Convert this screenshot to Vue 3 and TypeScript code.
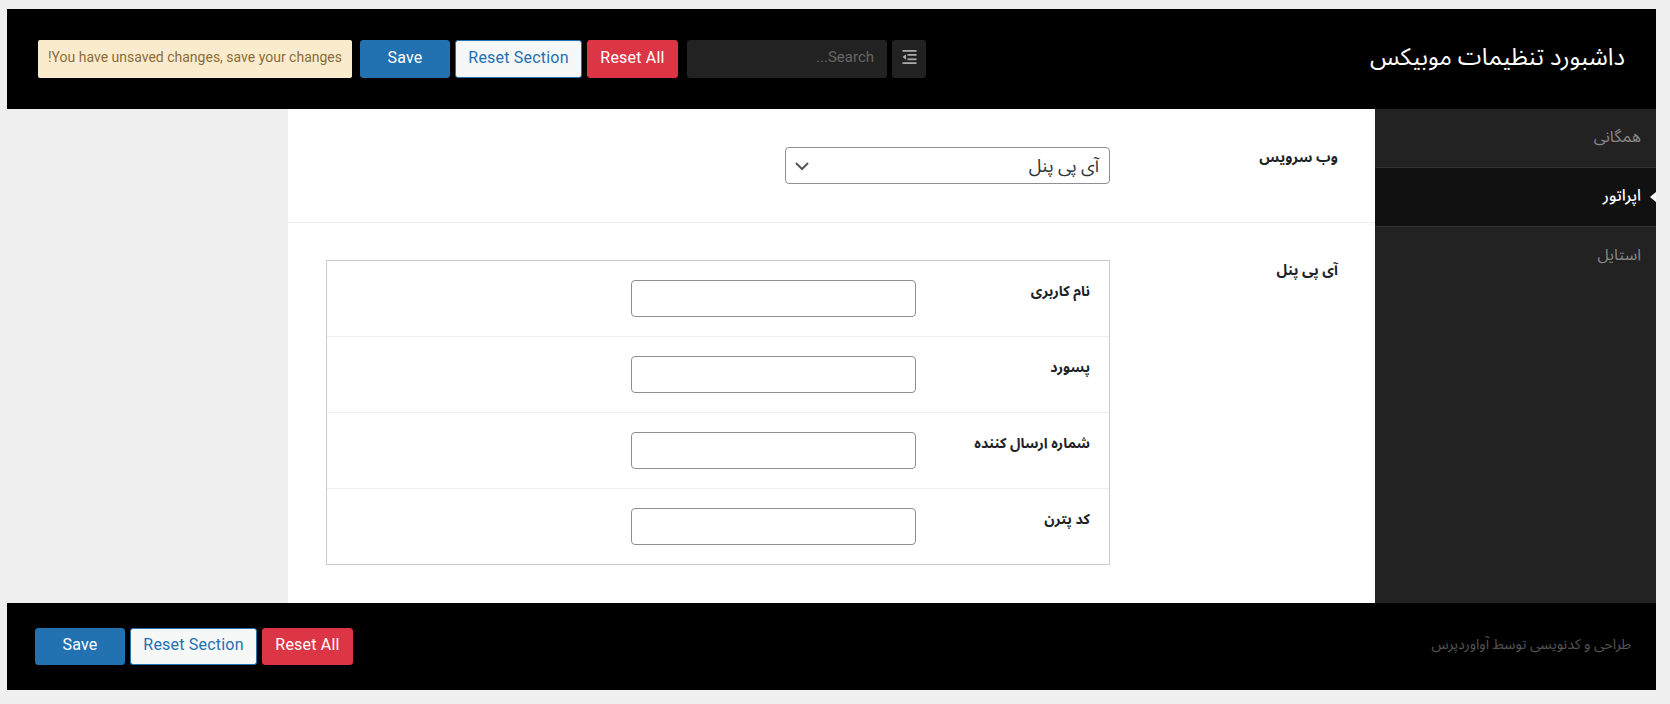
<script setup lang="ts">
const navItems = [
  { label: 'همگانی', active: false },
  { label: 'اپراتور', active: true },
  { label: 'استایل', active: false },
]
const fields = ['نام کاربری', 'پسورد', 'شماره ارسال کننده', 'کد پترن']
</script>

<template>
  <div class="page" dir="rtl">
    <header class="top">
      <h1 class="title">داشبورد تنظیمات موبیکس</h1>
      <div class="tools">
        <button class="toggle" type="button" aria-label="toggle">
          <svg width="15" height="14" viewBox="0 0 15 14">
            <rect x="0.5" y="0" width="14" height="1.8" fill="#aaa" />
            <rect x="5.5" y="4" width="9" height="1.8" fill="#aaa" />
            <rect x="5.5" y="8.4" width="9" height="1.8" fill="#aaa" />
            <polygon points="0.5,7 4,4.2 4,9.8" fill="#aaa" />
            <rect x="0.5" y="12.2" width="14" height="1.8" fill="#aaa" />
          </svg>
        </button>
        <div class="search" dir="ltr"><span>...Search</span></div>
        <div class="actions">
          <button class="btn danger" type="button">Reset All</button>
          <button class="btn ghost" type="button">Reset Section</button>
          <button class="btn primary" type="button">Save</button>
        </div>
        <div class="notice">!You have unsaved changes, save your changes</div>
      </div>
    </header>

    <div class="body">
      <nav class="side">
        <a v-for="item in navItems" :key="item.label" class="nav" :class="{ active: item.active }">{{ item.label }}</a>
      </nav>
      <main class="main">
        <section class="row">
          <div class="row-label">وب سرویس</div>
          <div class="select">
            <span>آی پی پنل</span>
            <svg width="14" height="10" viewBox="0 0 14 10">
              <path d="M1 2 L7 8 L13 2" fill="none" stroke="#50575e" stroke-width="2" />
            </svg>
          </div>
        </section>
        <section class="row second">
          <div class="row-label">آی پی پنل</div>
          <div class="table">
            <div v-for="f in fields" :key="f" class="t-row">
              <div class="t-label">{{ f }}</div>
              <div class="t-input"></div>
            </div>
          </div>
        </section>
      </main>
      <div class="gutter"></div>
    </div>

    <footer class="bottom">
      <div class="credit">طراحی و کدنویسی توسط آواوردپرس</div>
      <div class="actions foot">
        <button class="btn danger" type="button">Reset All</button>
        <button class="btn ghost" type="button">Reset Section</button>
        <button class="btn primary" type="button">Save</button>
      </div>
    </footer>
  </div>
</template>

<style>
html, body { margin: 0; background: #f0f0f0; }
</style>

<style scoped>
.page {
  width: 1649px;
  margin: 9px 14px 14px 7px;
  font-family: "Roboto", "Noto Sans Arabic", sans-serif;
  color: #1d2327;
}
.top {
  height: 100px;
  background: #000;
  display: flex;
  align-items: center;
  justify-content: space-between;
  padding: 0 31px 0 31px;
  box-sizing: border-box;
}
.title {
  margin: 0 0 3px;
  font-size: 24px;
  font-weight: 400;
  color: #fff;
}
.tools { display: flex; align-items: center; }
.toggle {
  width: 34px;
  height: 38px;
  padding: 0 0 4px;
  border: 0;
  border-radius: 3px;
  background: #222;
  display: flex;
  align-items: center;
  justify-content: center;
}
.search {
  width: 200px;
  height: 38px;
  margin-right: 5px;
  padding: 0 13px 4px;
  box-sizing: border-box;
  background: #222;
  border-radius: 3px;
  color: #666;
  font-size: 15px;
  display: flex;
  align-items: center;
  justify-content: flex-end;
}
.actions { display: flex; gap: 5px; margin-right: 9px; }
.btn {
  height: 38px;
  border-radius: 3px;
  font-family: "Roboto", sans-serif;
  font-size: 16px;
  box-sizing: border-box;
  padding: 0 0 3px;
  border: 1px solid transparent;
  letter-spacing: 0.2px;
}
.primary { width: 90px; background: #2271b1; border-color: #2271b1; color: #fff; }
.ghost { width: 127px; background: #f6f7f7; border-color: #2271b1; color: #2271b1; }
.danger { width: 91px; background: #dc3545; border-color: #dc3545; color: #fff; }
.notice {
  width: 314px;
  height: 38px;
  margin-right: 8px;
  padding-bottom: 5px;
  box-sizing: border-box;
  background: #faebcc;
  border-radius: 2px;
  color: #8a6d3b;
  font-size: 14px;
  display: flex;
  align-items: center;
  justify-content: center;
  direction: ltr;
}
.body { display: flex; height: 494px; }
.side { width: 281px; flex: none; background: #222; }
.nav {
  display: block;
  height: 59px;
  box-sizing: border-box;
  padding: 11px 15px 0 0;
  border-bottom: 1px solid #333;
  font-size: 16px;
  color: #888;
  position: relative;
}
.nav:last-child { border-bottom: 0; }
.nav.active { background: #111; color: #fff; font-weight: 500; }
.nav.active::before {
  content: "";
  position: absolute;
  right: 0;
  top: 24px;
  border: 5px solid transparent;
  border-right: 0;
  border-left: 6px solid #fff;
  transform: scaleX(-1);
}
.main { width: 1087px; flex: none; background: #fff; }
.gutter { flex: 1; }
.row {
  display: flex;
  padding: 38px 0;
  box-sizing: border-box;
}
.row.second { border-top: 1px solid #eee; padding-top: 37px; padding-bottom: 0; }
.row-label {
  width: 265px;
  flex: none;
  box-sizing: border-box;
  padding: 1px 37px 0 0;
  font-size: 14.4px;
  font-weight: 700;
  line-height: 20px;
}
.select {
  width: 325px;
  height: 37px;
  box-sizing: border-box;
  border: 1px solid #8c8f94;
  border-radius: 4px;
  padding: 0 10px 0 9px;
  display: flex;
  align-items: center;
  justify-content: space-between;
  font-size: 18px;
  color: #2c3338;
}
.table { width: 784px; height: 305px; box-sizing: border-box; border: 1px solid #ccc; }
.t-row {
  display: flex;
  height: 76px;
  box-sizing: border-box;
  padding: 19px 0;
  border-bottom: 1px solid #eee;
}
.t-row:last-child { border-bottom: 0; height: 75px; }
.t-label {
  width: 193px;
  flex: none;
  box-sizing: border-box;
  padding: 1px 19px 0 0;
  font-size: 14.2px;
  font-weight: 700;
  line-height: 20px;
}
.t-input {
  width: 285px;
  height: 37px;
  box-sizing: border-box;
  border: 1px solid #8c8f94;
  border-radius: 4px;
  background: #fff;
}
.bottom {
  height: 87px;
  background: #000;
  display: flex;
  align-items: center;
  justify-content: space-between;
  padding: 0 25px 0 28px;
  box-sizing: border-box;
}
.credit { font-size: 14.2px; color: #555; padding-bottom: 6px; }
.foot { margin-right: 0; }
.foot .btn { height: 37px; padding-bottom: 4px; }
</style>
